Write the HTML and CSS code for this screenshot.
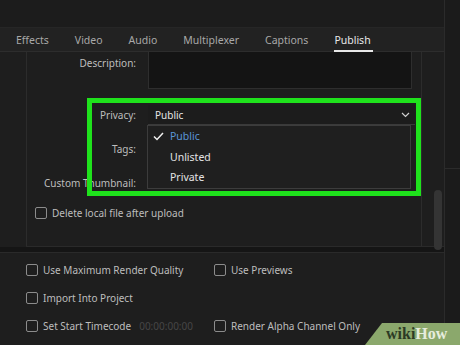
FILE: index.html
```html
<!DOCTYPE html>
<html lang="en">

<head>
    <meta charset="UTF-8">
    <title>Export Settings - Publish</title>
    <link rel="stylesheet" href="styles.css">
</head>

<body>
    <div class="app">
        <div class="main">
            <div class="top"></div>

            <!-- Tabs -->
            <div class="tabs">
                <span class="tab">Effects</span>
                <span class="tab">Video</span>
                <span class="tab">Audio</span>
                <span class="tab">Multiplexer</span>
                <span class="tab">Captions</span>
                <span class="tab active">Publish</span>
            </div>

            <!-- Publish settings -->
            <div class="panel-wrap">
                <div class="panel">
                    <div class="row row-desc">
                        <label class="label">Description:</label>
                        <div class="textarea"></div>
                    </div>
                    <div class="row row-privacy">
                        <label class="label">Privacy:</label>
                        <div class="select">
                            <span>Public</span>
                            <svg class="chevron" width="9" height="6" viewBox="0 0 9 6">
                                <path d="M1 1 L4.5 4.5 L8 1" fill="none" stroke="#d0d0d0" stroke-width="1.2"/>
                            </svg>
                        </div>
                    </div>
                    <div class="row row-tags">
                        <label class="label">Tags:</label>
                        <div class="field"></div>
                    </div>
                    <div class="row row-thumb">
                        <label class="label">Custom Thumbnail:</label>
                        <div class="field"></div>
                    </div>
                    <div class="check check-delete">
                        <span class="box"></span>
                        <span>Delete local file after upload</span>
                    </div>
                </div>
                <div class="scroll">
                    <div class="thumb"></div>
                </div>
            </div>

            <div class="separator"></div>

            <!-- Render options -->
            <div class="options">
                <div class="col">
                    <div class="check"><span class="box"></span><span>Use Maximum Render Quality</span></div>
                    <div class="check"><span class="box"></span><span>Import Into Project</span></div>
                    <div class="check"><span class="box"></span><span>Set Start Timecode</span><span class="timecode">00:00:00:00</span></div>
                </div>
                <div class="col">
                    <div class="check"><span class="box"></span><span>Use Previews</span></div>
                    <div class="check"></div>
                    <div class="check"><span class="box"></span><span>Render Alpha Channel Only</span></div>
                </div>
            </div>
        </div>
        <div class="strip"></div>

        <!-- Open privacy menu -->
        <div class="menu">
            <div class="item selected">
                <svg class="tick" width="11" height="9" viewBox="0 0 11 9">
                    <path d="M1 4.5 L4 7.5 L10 1" fill="none" stroke="#f0f0f0" stroke-width="1.5"/>
                </svg>
                Public
            </div>
            <div class="item">Unlisted</div>
            <div class="item">Private</div>
        </div>

        <!-- Highlight -->
        <div class="highlight"></div>

        <div class="badge"><span class="wiki">wiki</span><span class="how">How</span></div>
    </div>
</body>

</html>
```

FILE: styles.css
```css
body {
    margin: 0;
    background-color: #1d1d1d;
    font-family: 'Noto Sans', 'Open Sans', sans-serif;
    font-size: 10px;
    color: #bdbdbd;
}

.app {
    position: relative;
    display: flex;
    width: 460px;
    height: 345px;
    overflow: hidden;
    background-color: #1e1e1e;
}

.main {
    width: 444px;
    display: flex;
    flex-direction: column;
}

.strip {
    flex: 1;
    background-color: #1b1b1b;
    border-left: 1px solid #2b2b2b;
    background-image: linear-gradient(#2b2b2b, #2b2b2b);
    background-size: 100% 1px;
    background-position: 0 168px;
    background-repeat: no-repeat;
}

.top {
    height: 27px;
    background-color: #1c1c1c;
    border-bottom: 1px solid #262626;
}

.tabs {
    height: 23px;
    display: flex;
    align-items: center;
    gap: 26px;
    background-color: #222;
    border-bottom: 1px solid #2d2d2d;
    padding-left: 16px;
}

.tab {
    position: relative;
    color: #a8a8a8;
    font-size: 10.5px;
}

.tab.active {
    color: #e8e8e8;
}

.tab.active::after {
    content: "";
    position: absolute;
    left: 0;
    right: -2px;
    bottom: -5px;
    height: 2px;
    background-color: #e8e8e8;
}

.panel-wrap {
    display: flex;
    height: 194px;
    margin-left: 26px;
    border-bottom: 1px solid #2a2a2a;
}

.panel {
    position: relative;
    width: 394px;
    border-left: 1px solid #2c2c2c;
    border-right: 1px solid #2c2c2c;
    display: flex;
    flex-direction: column;
}

.row {
    display: flex;
    height: 20px;
}

.label {
    width: 109px;
    text-align: right;
    padding-right: 12px;
    line-height: 20px;
}

.row-desc {
    height: 37px;
}

.row-desc .label {
    line-height: 22px;
}

.textarea {
    width: 262px;
    background-color: #141414;
    border: 1px solid #2e2e2e;
    border-top: none;
}

.row-privacy {
    margin-top: 16px;
}

.select {
    width: 255px;
    display: flex;
    align-items: center;
    justify-content: space-between;
    padding: 0 5px 0 7px;
    background-color: #1c1c1c;
    border-bottom: 1px solid #3a3a3a;
    color: #e6e6e6;
}

.row-tags {
    margin-top: 14px;
}

.row-thumb {
    margin-top: 14px;
}

.field {
    width: 262px;
}

.check {
    display: flex;
    align-items: center;
    height: 14px;
}

.box {
    width: 10px;
    height: 10px;
    border: 1px solid #8c8c8c;
    border-radius: 2px;
    margin-right: 5px;
}

.check-delete {
    margin-top: 13px;
    margin-left: 8px;
}

.scroll {
    flex: 1;
    position: relative;
}

.thumb {
    position: absolute;
    left: 12px;
    top: 138px;
    width: 8px;
    height: 60px;
    border-radius: 4px;
    background-color: #343434;
}

.separator {
    height: 5px;
    background-color: #151515;
    border-bottom: 1px solid #2a2a2a;
}

.options {
    display: flex;
    padding-top: 10px;
    padding-left: 26px;
}

.col {
    display: flex;
    flex-direction: column;
    gap: 14px;
}

.col:first-child {
    width: 188px;
}

.timecode {
    margin-left: 8px;
    color: #464646;
}

.menu {
    position: absolute;
    left: 147px;
    top: 125px;
    width: 262px;
    height: 62px;
    background-color: #1f1f1f;
    border: 1px solid #3c3c3c;
}

.item {
    position: relative;
    height: 20.5px;
    line-height: 20px;
    padding-left: 22px;
    color: #e4e4e4;
    font-size: 10.5px;
}

.item.selected {
    color: #5a95d6;
}

.tick {
    position: absolute;
    left: 5px;
    top: 6px;
}

.highlight {
    position: absolute;
    left: 87px;
    top: 98px;
    width: 324px;
    height: 88px;
    border: 5px solid #1fe21c;
}

.badge {
    position: absolute;
    right: 0;
    bottom: 0;
    width: 95px;
    height: 22px;
    background-color: #8ba86c;
    clip-path: polygon(17px 0, 100% 0, 100% 100%, 0 100%);
    font-family: 'Liberation Serif', serif;
    font-weight: bold;
    font-size: 16px;
    line-height: 22px;
    padding-left: 21px;
    box-sizing: border-box;
}

.wiki {
    color: #2c3a24;
}

.how {
    color: #e6eddd;
}
```
